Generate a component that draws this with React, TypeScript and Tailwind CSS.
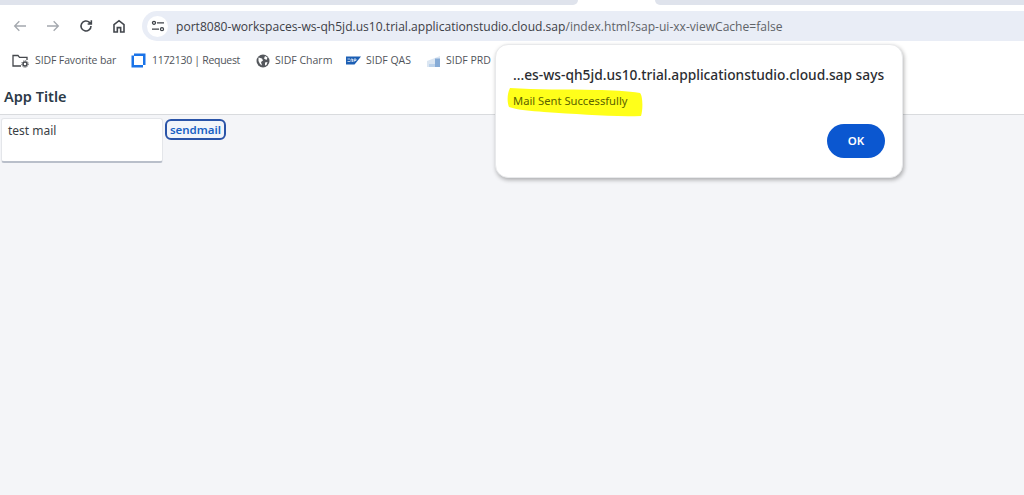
import React from "react";

function Bookmark({ icon, label, w, t }: { icon: React.ReactNode; label: string; w: string; t?: string }) {
  return (
    <div className={`flex items-center shrink-0 ${w}`}>
      {icon}
      <span className={`text-[10.5px] text-[#50545a] font-['Open_Sans',sans-serif] whitespace-nowrap ${t ?? ""}`}>{label}</span>
    </div>
  );
}

export default function App() {
  return (
    <div className="relative w-[1024px] h-[495px] overflow-hidden bg-[#f4f5f8] font-['Open_Sans',sans-serif]">
      {/* Tab strip */}
      <div className="h-[5px] bg-white flex">
        <div className="w-[578px] h-[5px] bg-[#dfe3ec] rounded-br-[5px]" />
        <div className="w-[77px] h-[5px]" />
        <div className="flex-1 h-[5px] bg-[#dfe3ec] rounded-bl-[5px]" />
      </div>
      {/* Toolbar */}
      <div className="h-[37px] bg-white flex items-start pt-[6px]">
        <div className="flex items-center w-[142px] h-[30px] pl-[12px] gap-[17px]">
          <svg width="16" height="16" viewBox="0 0 24 24" fill="none" stroke="#a4a8ae" strokeWidth="2"><path d="M21 12H4M11 5l-7 7 7 7" /></svg>
          <svg width="16" height="16" viewBox="0 0 24 24" fill="none" stroke="#a4a8ae" strokeWidth="2"><path d="M3 12h17M13 5l7 7-7 7" /></svg>
          <svg width="16" height="16" viewBox="0 0 24 24" fill="none" stroke="#43474d" strokeWidth="2.4"><path d="M19.5 12a7.5 7.5 0 1 1-2.3-5.4L20 9M20 3.5V9h-5.5" /></svg>
          <svg width="16" height="16" viewBox="0 0 24 24" fill="none" stroke="#43474d" strokeWidth="2.4"><path d="M4.5 21V10L12 4l7.5 6v11h-5v-6.5h-5V21z" /></svg>
        </div>
        <div className="flex-1 h-[30px] bg-[#e9edf6] rounded-l-[15px] flex items-center pl-[5px]">
          <div className="w-[21px] h-[21px] rounded-full bg-white flex items-center justify-center">
            <svg width="14" height="14" viewBox="0 0 14 14" fill="none" stroke="#3f4349" strokeWidth="1.3">
              <circle cx="3" cy="3.8" r="1.5" />
              <path d="M6 3.8h7M1 10.2h7" />
              <circle cx="11" cy="10.2" r="1.5" />
            </svg>
          </div>
          <span className="ml-[8px] pt-[2px] text-[12.09px] text-[#3d4046] whitespace-nowrap">
            port8080-workspaces-ws-qh5jd.us10.trial.applicationstudio.cloud.sap<span className="text-[#5f6368]">/index.html?sap-ui-xx-viewCache=false</span>
          </span>
        </div>
      </div>
      {/* Bookmarks */}
      <div className="h-[36px] bg-white flex items-center pl-[12px] pt-[1px]">
        <Bookmark
          w="w-[119px]"
          t="tracking-[-0.12px]"
          label="SIDF Favorite bar"
          icon={
            <svg width="17" height="14" viewBox="0 0 17 14" fill="none" stroke="#45484d" strokeWidth="1.3" className="mr-[6px]">
              <path d="M9 12H1V1.5h5l1.5 1.8h7.5V6" />
              <circle cx="13" cy="10" r="2" strokeWidth="1.5" />
              <circle cx="13" cy="10" r="3.3" strokeWidth="0.9" strokeDasharray="1.2 1" />
            </svg>
          }
        />
        <Bookmark
          w="w-[125px]"
          t="tracking-[-0.3px]"
          label="1172130 | Request"
          icon={
            <svg width="15" height="15" viewBox="0 0 15 15" className="mr-[6px]">
              <path d="M3 0.5h11.5V12H12V3H3z" fill="#1a73e8" />
              <path d="M0.5 2.5H3V12h9v2.5H0.5z" fill="#1a73e8" />
            </svg>
          }
        />
        <Bookmark
          w="w-[90px]"
          label="SIDF Charm"
          icon={
            <svg width="14" height="14" viewBox="0 0 14 14" className="mr-[5px]">
              <circle cx="7" cy="7" r="6.5" fill="#55585d" />
              <path d="M2.5 3.5l3.5 1 1 2-2 1.5 1 3.5-2-1.5-1.5-3zM9 2l2.5 1.5-1 2.5-2.5-1.5zM9 8.5l2.5-.5-1 3-1.5.5z" fill="#ffffff" />
            </svg>
          }
        />
        <Bookmark
          w="w-[80px]"
          label="SIDF QAS"
          icon={
            <svg width="15" height="9" viewBox="0 0 15 9" className="mr-[5px]">
              <path d="M0 0.5h15l-6.5 8H0z" fill="#1c5fb4" />
              <path d="M1.5 3h2.5M1.5 5.5h2.5M5 6V3h1.5v3M8 6V3h2v1.5H8" stroke="#ffffff" strokeWidth="0.7" fill="none" />
            </svg>
          }
        />
        <Bookmark
          w="w-[70px]"
          label="SIDF PRD"
          icon={
            <svg width="15" height="14" viewBox="0 0 15 14" className="mr-[5px]">
              <path d="M1 7l13-5v11H1z" fill="#dbe6f2" />
              <path d="M9 4.5h5V13H9z" fill="#86abd6" />
              <path d="M3 10h6v3H3z" fill="#bcd2ea" />
            </svg>
          }
        />
      </div>
      {/* App header */}
      <div className="h-[37px] bg-white border-b border-[#d9dbde] flex items-center pl-[4px] pt-[2px]">
        <span className="text-[14.5px] font-semibold text-[#2c3a48] font-['Noto_Sans',sans-serif]">App Title</span>
      </div>
      {/* Content */}
      <div className="flex items-start pl-[1px] pt-[3px] gap-[2px]">
        <div className="w-[162px] h-[45px] bg-white rounded-[3px] border border-[#e4e6ea] border-b-2 border-b-[#b9bfca] pl-[6px] pt-[3px] text-[12px] text-[#3a3f45] font-['Noto_Sans',sans-serif]">
          test mail
        </div>
        <div className="w-[61px] h-[21px] mt-[1px] flex items-center justify-center rounded-[6px] border-2 border-[#2a54a8] bg-[#f2f5fa] text-[11.5px] font-semibold text-[#1a62c4] font-['Noto_Sans',sans-serif]">
          sendmail
        </div>
      </div>
      {/* Dialog */}
      <div className="absolute left-[495px] top-[44px] w-[408px] h-[134px] bg-white rounded-[13px] border border-[#e8e9eb] shadow-[1px_2px_4px_rgba(0,0,0,0.3)] pl-[17px] pr-[17px] pt-[20px] font-['Noto_Sans',sans-serif]">
        <div className="text-[13.75px] font-medium text-[#2b2d31] whitespace-nowrap leading-[20px]">
          ...es-ws-qh5jd.us10.trial.applicationstudio.cloud.sap says
        </div>
        <div className="relative mt-[8px] text-[11.2px] text-[#5b6200] leading-[16px]">
          <svg width="142" height="30" viewBox="0 0 142 30" className="absolute left-[-7px] top-[-5px]">
            <path d="M4 0C30 2 60 1 90 2c15 0 32 1 44 3 3 3 3 17 1 23-32 1-62-2-97-4C25 23 12 22 3 19 1 14 1 6 4 0z" fill="#ffff1a" />
          </svg>
          <span className="relative">Mail Sent Successfully</span>
        </div>
        <div className="flex justify-end mt-[15px]">
          <div className="w-[58px] h-[34px] rounded-full bg-[#0b57d0] flex items-center justify-center text-white text-[11.5px] font-semibold">
            OK
          </div>
        </div>
      </div>
    </div>
  );
}
